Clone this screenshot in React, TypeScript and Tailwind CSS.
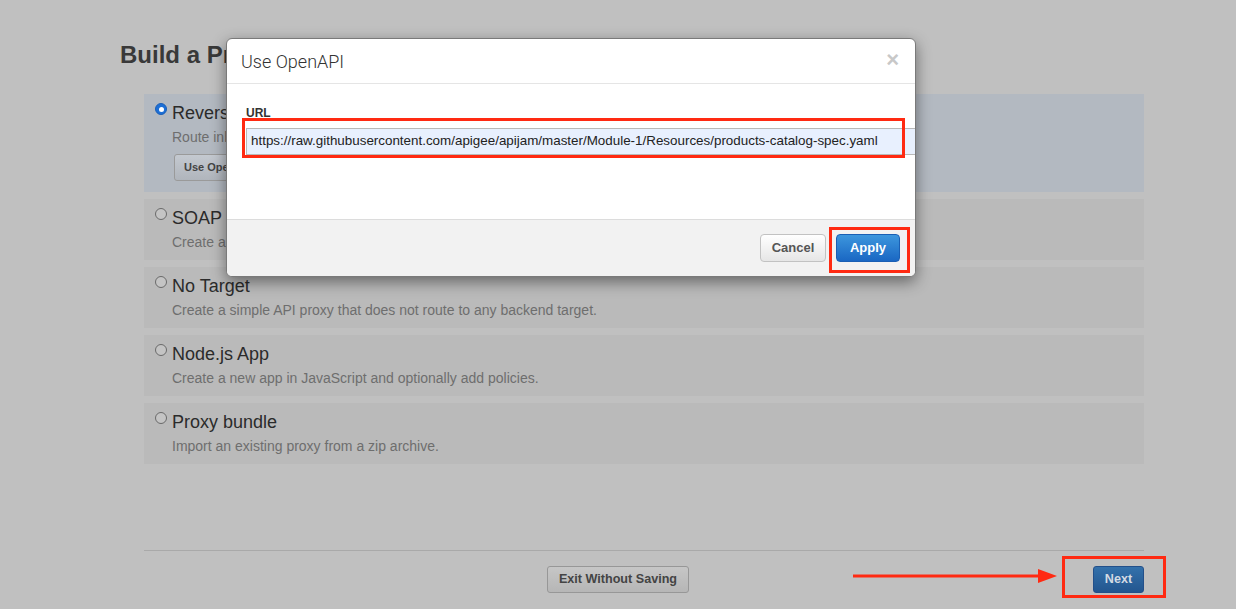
import React from "react";

const font = { fontFamily: "'Liberation Sans', Arial, sans-serif" };

function Radio({ checked }: { checked?: boolean }) {
  return checked ? (
    <span className="w-[12px] h-[12px] rounded-full bg-[#1d6fd6] border border-[#1a5fb8] flex items-center justify-center shrink-0">
      <span className="w-[5px] h-[5px] rounded-full bg-white" />
    </span>
  ) : (
    <span className="w-[12px] h-[12px] rounded-full border border-[#6a6a6a] bg-[#c4c4c4] shrink-0" />
  );
}

function Card({
  title,
  desc,
  selected,
  children,
}: {
  title: string;
  desc: string;
  selected?: boolean;
  children?: React.ReactNode;
}) {
  return (
    <div
      className={
        (selected ? "bg-[#b3b9c1] h-[98px]" : "bg-[#bababa] h-[61px]") +
        " pl-[11px] pt-[9px] flex gap-[5px]"
      }
    >
      <Radio checked={selected} />
      <div className="flex flex-col">
        <div className="text-[18px] leading-[20px] text-[#2b2b2b] whitespace-nowrap">{title}</div>
        <div className="mt-[6px] text-[14px] leading-[16px] text-[#6e6e6e] whitespace-nowrap">{desc}</div>
        {children}
      </div>
    </div>
  );
}

export default function App() {
  return (
    <div
      className="relative w-[1236px] h-[609px] bg-[#c0c0c0] overflow-hidden"
      style={font}
    >
      <div className="pt-[40px]">
        <h1 className="pl-[120px] text-[24px] leading-[30px] font-bold text-[#393939]">
          Build a Proxy
        </h1>
        <div className="ml-[144px] w-[1000px] mt-[24px] flex flex-col gap-[7px]">
          <Card
            selected
            title="Reverse proxy (most common)"
            desc="Route inbound requests to existing HTTP backend services."
          >
            <button className="mt-[9px] ml-[2px] w-[120px] h-[27px] rounded-[3px] border border-[#9a9a9a] bg-gradient-to-b from-[#c4c9d0] to-[#b0b5bc] text-[11px] font-bold text-[#444] text-left pl-[9px]">
              Use OpenAPI
            </button>
          </Card>
          <Card title="SOAP service" desc="Create a RESTful or pass-through proxy for a SOAP service." />
          <Card
            title="No Target"
            desc="Create a simple API proxy that does not route to any backend target."
          />
          <Card
            title="Node.js App"
            desc="Create a new app in JavaScript and optionally add policies."
          />
          <Card title="Proxy bundle" desc="Import an existing proxy from a zip archive." />
        </div>
        <div className="ml-[144px] w-[1000px] mt-[86px] border-t border-[#a9a9a9]" />
        <div className="grid grid-cols-[1fr_auto_1fr] mt-[15px]">
          <div />
          <button className="h-[27px] px-[11px] rounded-[3px] border border-[#979797] bg-gradient-to-b from-[#c6c6c6] to-[#b6b6b6] text-[12.6px] font-bold text-[#444]">
            Exit Without Saving
          </button>
          <div className="flex justify-end pr-[92px]">
            <button className="w-[51px] h-[27px] rounded-[3px] border border-[#23508a] bg-gradient-to-b from-[#3471ab] to-[#23568f] text-[12.6px] font-bold text-[#d4dbe3]">
              Next
            </button>
          </div>
        </div>
      </div>

      {/* Modal */}
      <div className="absolute left-[226px] top-[38px] w-[690px] h-[239px] bg-white rounded-[6px] border border-[#7a7a7a] shadow-[0_5px_15px_rgba(0,0,0,0.45)] overflow-hidden flex flex-col">
        <div className="h-[45px] border-b border-[#e5e5e5] flex items-center justify-between pl-[14px] pr-[16px] shrink-0">
          <span
            className="text-[18px] font-light text-[#333]"
            style={{ fontFamily: "Roboto, 'Liberation Sans', sans-serif" }}
          >
            Use OpenAPI
          </span>
          <span className="text-[22px] leading-[22px] font-bold text-[#c8c8c8] mt-[-2px]">×</span>
        </div>
        <div className="flex-1 pl-[19px] pt-[22px]">
          <div className="text-[12px] leading-[14px] font-bold text-[#333]">URL</div>
          <div className="mt-[8px] h-[27px] border border-[#b9b9b9] border-r-0 bg-[#e8f0fe] pl-[4px] flex items-center text-[13.4px] text-[#222] whitespace-nowrap">
            https://raw.githubusercontent.com/apigee/apijam/master/Module-1/Resources/products-catalog-spec.yaml
          </div>
        </div>
        <div className="h-[57px] border-t border-[#dcdcdc] bg-[#f2f2f2] flex justify-end items-start pt-[14px] pr-[15px] gap-[10px] shrink-0">
          <button className="w-[66px] h-[28px] rounded-[4px] border border-[#c2c2c2] bg-gradient-to-b from-white to-[#e6e6e6] text-[13px] font-bold text-[#555]">
            Cancel
          </button>
          <button className="w-[64px] h-[28px] rounded-[4px] border border-[#1a5fb4] bg-gradient-to-b from-[#3d96dd] to-[#1a67c3] text-[13px] font-bold text-white">
            Apply
          </button>
        </div>
      </div>

      {/* Annotations */}
      <div className="absolute left-[242px] top-[118px] w-[663px] h-[40px] border-[3px] border-[#ff2a12]" />
      <div className="absolute left-[829px] top-[227px] w-[81px] h-[46px] border-[3px] border-[#ff2a12]" />
      <div className="absolute left-[1062px] top-[556px] w-[104px] h-[42px] border-[3px] border-[#ff2a12]" />
      <svg className="absolute left-[850px] top-[566px]" width="210" height="20" viewBox="0 0 210 20">
        <line x1="3" y1="10" x2="190" y2="10" stroke="#ff2a12" strokeWidth="3" />
        <polygon points="188,3 207,10 188,17" fill="#ff2a12" />
      </svg>
    </div>
  );
}
